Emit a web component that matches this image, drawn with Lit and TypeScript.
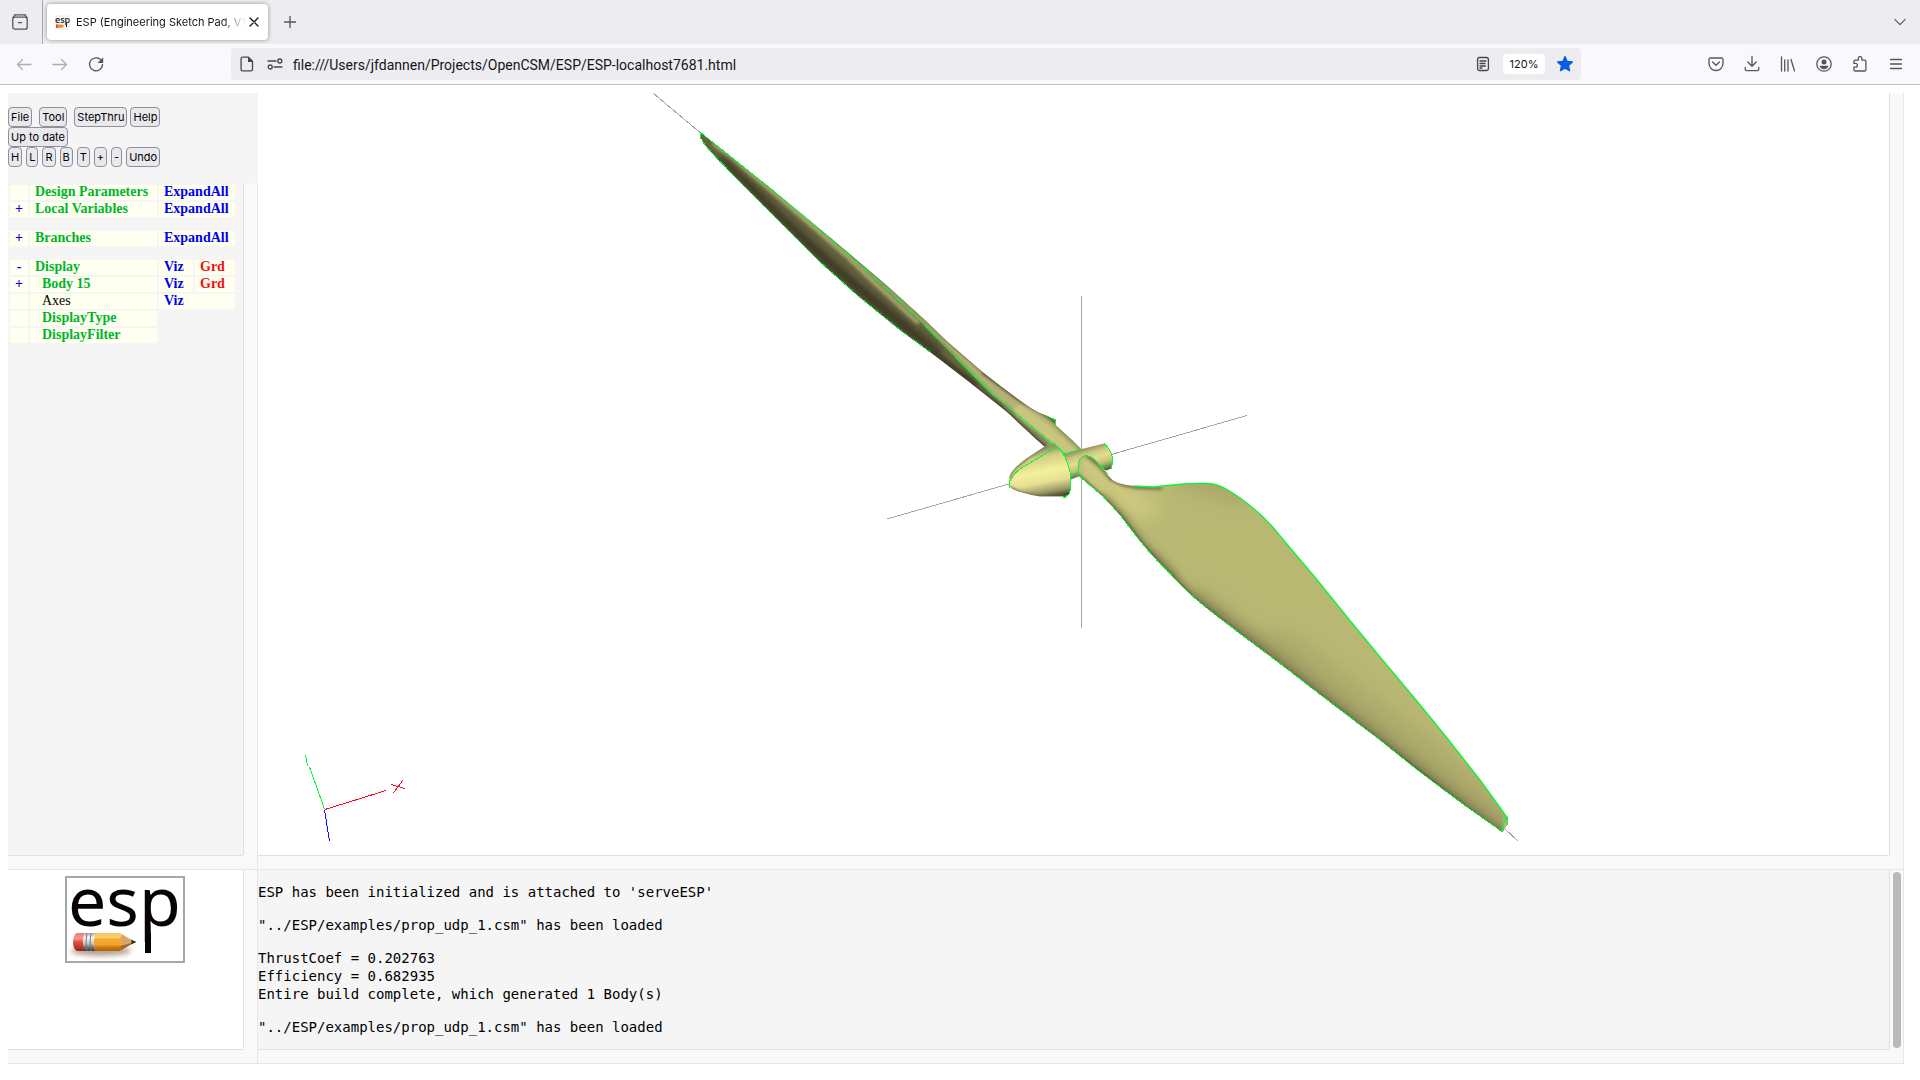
import { LitElement, html, svg, css, nothing } from "lit";
import { customElement, state } from "lit/decorators.js";

type Link = "ExpandAll" | "Viz" | "Grd";
interface TreeRow {
  toggle?: "+" | "-";
  label: string;
  indent?: boolean;
  plain?: boolean;
  wide?: Link;
  viz?: boolean;
  grd?: boolean;
}

const icon = (body: unknown) => html`<svg class="icon" width="16" height="16" viewBox="0 0 16 16" aria-hidden="true">${body}</svg>`;

const ICONS = {
  view: svg`<path d="M3 .8h10"/><rect x=".8" y="3.2" width="14.4" height="12" rx="2"/><path d="M1 3.6 3 .8M15 3.6 13 .8M6.3 8.6h3.4"/>`,
  close: svg`<path d="m4 4 8 8M12 4l-8 8"/>`,
  plus: svg`<path d="M8 2.500v11M2.500 8h11"/>`,
  chevron: svg`<path d="m2 5 6 6 6-6"/>`,
  back: svg`<path d="M15 8.500H1.500M6.500 3.500 1.500 8.500 6.500 13.500"/>`,
  forward: svg`<path d="M1 8.500h13.500M9.500 3.500 14.500 8.500 9.500 13.500"/>`,
  reload: svg`<path d="M13.600 5A6.500 6.500 0 1 0 14.500 8.500"/><path class="solid" d="M15.200 1.300v5.200a.5.5 0 0 1-.5.5H9.500z"/>`,
  page: svg`<path d="M3.700 1.200h5.800l4 4v8.100a1.600 1.600 0 0 1-1.600 1.600H3.700a1.600 1.600 0 0 1-1.600-1.600V2.800a1.600 1.600 0 0 1 1.600-1.600z"/><path class="solid" d="M9 1v5h5z"/>`,
  tune: svg`<path d="M1 5h8M7 11h8"/><circle cx="12.800" cy="5" r="2"/><circle cx="3.200" cy="11" r="2"/>`,
  reader: svg`<rect x="2.600" y="1.500" width="10.800" height="13" rx="1.800"/><path d="M5 5h6M5 7.500h5M5 10h5.500M5 12h2"/>`,
  star: svg`<path class="star" d="m8 .6 2.200 4.800 5.200.6-3.900 3.600 1.100 5.200L8 12.300 3.400 14.800l1.100-5.200L.6 6l5.200-.6z"/>`,
  pocket: svg`<path d="M2.300 2h11.400a1.300 1.300 0 0 1 1.300 1.300v4.200a7 7 0 0 1-14 0V3.300A1.300 1.300 0 0 1 2.300 2z"/><path d="m4.600 6 3.400 3.300L11.400 6"/>`,
  download: svg`<path d="M8 .5V10M3.800 6 8 10.200 12.200 6M1.200 11.500v1.600a1.600 1.600 0 0 0 1.600 1.600h10.400a1.600 1.600 0 0 0 1.600-1.600v-1.600"/>`,
  library: svg`<path d="M1.500 1v14M4.700 4v11M8 4v11M11 3.500l3.500 11.500"/>`,
  account: svg`<circle cx="8" cy="8" r="7.200"/><circle class="solid" cx="8" cy="5.900" r="2.500"/><path class="solid" d="M3.500 9.800h9a4.700 4.700 0 0 1-9 0z"/>`,
  puzzle: svg`<path d="M6.300 4.200V2.500a1.800 1.800 0 0 1 3.600 0v1.700h2.700a1.300 1.300 0 0 1 1.300 1.300v8.200a1.300 1.300 0 0 1-1.300 1.300H3.200a1.300 1.300 0 0 1-1.300-1.300v-2.500h1.600a1.900 1.900 0 0 0 0-3.800H1.900V5.500a1.300 1.300 0 0 1 1.300-1.300z"/>`,
  menu: svg`<path d="M2.500 3.500h11M2.500 8h11M2.500 12.500h11"/>`,
};

@customElement("esp-logo")
class EspLogo extends LitElement {
  static styles = css`
    :host { display: block; }
    svg { display: block; width: 100%; height: auto; overflow: visible; }
    .word { font-family: "Noto Sans", "Open Sans", sans-serif; font-size: 68px; fill: #080404; }
  `;
  render() {
    return html`<svg viewBox="0 0 116 83" role="img" aria-label="esp">
      <defs>
        <linearGradient id="wood" x1="0" y1="0" x2="0" y2="1">
          <stop offset="0" stop-color="#f9c258"/><stop offset=".28" stop-color="#fbd473"/>
          <stop offset=".32" stop-color="#f5ab35"/><stop offset=".68" stop-color="#f2a12c"/>
          <stop offset=".72" stop-color="#d98418"/><stop offset="1" stop-color="#a9620f"/>
        </linearGradient>
        <linearGradient id="rubber" x1="0" y1="0" x2="0" y2="1">
          <stop offset="0" stop-color="#ee7a6c"/><stop offset=".3" stop-color="#f69a8c"/>
          <stop offset=".5" stop-color="#e8503f"/><stop offset="1" stop-color="#9c2218"/>
        </linearGradient>
        <linearGradient id="metal" x1="0" y1="0" x2="0" y2="1">
          <stop offset="0" stop-color="#a8a8a8"/><stop offset=".25" stop-color="#fafafa"/>
          <stop offset=".6" stop-color="#c4c4c4"/><stop offset=".8" stop-color="#6e6e6e"/>
          <stop offset="1" stop-color="#3c3c3c"/>
        </linearGradient>
        <filter id="soft" x="-20%" y="-80%" width="140%" height="260%"><feGaussianBlur stdDeviation="2.500"/></filter>
      </defs>
      <ellipse cx="34" cy="73" rx="30" ry="5" fill="#7a5a38" opacity=".55" filter="url(#soft)"/>
      <text class="word" x="1" y="48">esp</text>
      <rect x="78" y="55" width="6" height="20" fill="#080404"/>
      <path d="M10 55h8v18h-8q-4-2-4-9t4-9z" fill="url(#rubber)"/>
      <path d="M17 55h11q-2 9 0 18H17q-2-9 0-18z" fill="url(#metal)"/>
      <path d="M20 55q-2 9 0 18M24 55q-2 9 0 18" stroke="#777" fill="none"/>
      <path d="M28 55h25l5 9-5 9H28q-2-9 0-18z" fill="url(#wood)"/>
      <path d="M53 55 68 64 53 73q3-2 0-5 4-4 0-8 3-2 0-5z" fill="#dda468"/>
      <path d="M53 68 68 64 53 73q2-2 0-5z" fill="#a3672f"/>
      <path d="M64 61.500 69.500 64 64 66.500q1.500-2.500 0-5z" fill="#2c2a28"/>
    </svg>`;
  }
}

@customElement("model-view")
class ModelView extends LitElement {
  static styles = css`
    :host { display: block; min-height: 0; background: #fff; }
    svg { display: block; width: 100%; height: 100%; }
    .axis { stroke: #a5a5a5; stroke-width: 1; shape-rendering: crispEdges; fill: none; }
    .edge { stroke: #0cf53c; stroke-width: 1; fill: none; shape-rendering: crispEdges; }
    .bold { stroke-width: 1.400; shape-rendering: auto; }
    .x { stroke: #f5101c; } .y { stroke: #0cf53c; } .z { stroke: #0c14f5; }
    .triad { stroke-width: 1; fill: none; shape-rendering: crispEdges; }
    .shade { fill: none; stroke-linecap: round; stroke-linejoin: round; }
    .b2 { filter: url(#b2); } .b4 { filter: url(#b4); } .b8 { filter: url(#b8); }
  `;
  render() {
    const upper = "M700 132C725 152 749 171 773 190L813 223 847 251.500 887 285.500 923 318 948 342 985 374Q1003 388 1020 400.500T1045 415L1055.500 420V425L1072 440 1084 452 1070 462 1045 447 1037 440 1007 412 973 385 930 352 900 330 857 295 820 262 780 222 740 182 717 158.500 705 145 700 137z";
    const lowEdge = "M1078 475 1103.500 497Q1112 506 1120 515C1128 525 1135 535 1143.500 545Q1155 559 1170 573.500 1180 585 1193.500 597 1210 611 1230 626L1280 663.500 1330 702 1380 740 1420 772 1467 807 1502.500 832";
    const topEdge = "M1134 486 1153 487 1183 484Q1196 483 1207 483.500T1227 489.500Q1240 497 1253.500 508.500 1264 517 1273.500 528L1293.500 552 1313.500 575.500 1347 617 1380 657 1413.500 697Q1430 717 1447 738L1480 780 1497 803.500 1507 817.500";
    const lower = "M1078 475 1078.500 463.500Q1079 459 1082 457T1086 455.500Q1090 455.500 1094 459L1100 466 1110 477.500Q1114 482 1120 483.500T1134 486L1153 487 1183 484Q1196 483 1207 483.500T1227 489.500Q1240 497 1253.500 508.500 1264 517 1273.500 528L1293.500 552 1313.500 575.500 1347 617 1380 657 1413.500 697Q1430 717 1447 738L1480 780 1497 803.500 1507 817.500V825L1502.500 832 1467 807 1420 772 1380 740 1330 702 1280 663.500 1230 626Q1210 611 1193.500 597 1180 585 1170 573.500 1155 559 1143.500 545C1135 535 1128 525 1120 515Q1112 506 1103.500 497z";
    const cone = "M1009 485C1008 478 1010 474 1012 471.500Q1018 464 1027 458T1047 445L1052 443Q1055 443 1057 446 1062 451 1065 457 1068 463 1069.500 470 1071 475 1071 481 1071 488 1069.500 493.500L1065 497.500 1062 496.500 1040 496.500Q1030 495 1020 492T1009 485z";
    const shaft = "M1064 454 1082 449 1104 443.500Q1107 446 1108.500 448.500 1111 452 1112 455.500T1112.500 463.500L1111 468.500 1106.500 470.500 1100 468 1071 479.500z";
    return html`<svg viewBox="258 93 1631 762" preserveAspectRatio="xMidYMid meet" role="img" aria-label="Propeller model">
      <defs>
        <clipPath id="cu"><path d="${upper}"/></clipPath>
        <clipPath id="cl"><path d="${lower}"/></clipPath>
        <clipPath id="cc"><path d="${cone}"/></clipPath>
        <filter id="b2" filterUnits="userSpaceOnUse" x="650" y="90" width="900" height="800"><feGaussianBlur stdDeviation="1.800"/></filter>
        <filter id="b4" filterUnits="userSpaceOnUse" x="650" y="90" width="900" height="800"><feGaussianBlur stdDeviation="4"/></filter>
        <filter id="b8" filterUnits="userSpaceOnUse" x="650" y="90" width="900" height="800"><feGaussianBlur stdDeviation="10"/></filter>
        <linearGradient id="gs" gradientUnits="userSpaceOnUse" x1="1086" y1="448" x2="1094" y2="474">
          <stop offset="0" stop-color="#96925e"/><stop offset=".2" stop-color="#c9c580"/>
          <stop offset=".45" stop-color="#e2de90"/><stop offset=".7" stop-color="#c2be7a"/>
          <stop offset="1" stop-color="#55523a"/>
        </linearGradient>
        <linearGradient id="gc" gradientUnits="userSpaceOnUse" x1="1036" y1="450" x2="1045" y2="498">
          <stop offset="0" stop-color="#9a9664"/><stop offset=".16" stop-color="#d2ce85"/>
          <stop offset=".46" stop-color="#f4f09a"/><stop offset=".68" stop-color="#e4e092"/>
          <stop offset=".88" stop-color="#9c9864"/><stop offset="1" stop-color="#4a4832"/>
        </linearGradient>
      </defs>

      <path class="axis" d="M1081.500 296V628M887 519 1247 415.500M653 93 700 132.500M1505 829 1518 841"/>

      <g clip-path="url(#cu)">
        <path d="${upper}" fill="#66633f"/>
        <path class="shade b2" stroke="#a8a46c" stroke-width="5" d="M715 144 773 192 815 228 847 256 875 283 917 322"/>
        <path class="shade b4" stroke="#3b3925" stroke-width="11" d="M722 162 745 185 785 223 825 260 860 291 902 325 935 352"/>
        <path class="shade b2" stroke="#3f3d28" stroke-width="5" d="M745 182 770 210 818 253 860 289 905 327 945 361 975 384"/>
        <path class="shade b2" stroke="#55523a" stroke-width="3" d="M705 146 740 182 780 222 820 262 857 295 900 330 930 352"/>
        <path class="b2" fill="#b5b174" d="M830 239 887 285 923 318 948 342 985 374 1020 400 1055 420 1086 452 1065 454 1048 440 993 395 962 363 917 317 875 278z"/>
        <path class="shade b2" stroke="#c9c57f" stroke-width="13" d="M1020 412 1046 431 1080 462"/>
        <path class="shade b2" stroke="#8a8658" stroke-width="2" d="M830 237 887 285 923 318 948 342 985 374"/>
        <path class="shade b2" stroke="#5a573a" stroke-width="5" d="M985 373 1020 399 1045 413 1057 422"/>
        <path class="shade b2" stroke="#85825a" stroke-width="4" d="M1058 426 1086 452"/>
        <path class="shade b2" stroke="#949060" stroke-width="4" d="M1005 407 1025 426 1050 447"/>
        <path class="shade b2" stroke="#494630" stroke-width="5" d="M973 386 1007 413 1037 441 1047 450"/>
      </g>
      <path class="edge" d="M700 132 773 190.500 813 224.500 847 253.500 875 278.500 917 317 962 363.500 993.500 395 1048.500 440 1065 453.500"/>
      <path class="edge" stroke-dasharray="7 2" d="M700 132V137L705 145 717 158.500 740 182 780 222 820 262 857 295 900 330 930 352"/>
      <path class="edge" d="M1045 415 1055.500 420V425"/>

      <path d="${shaft}" fill="url(#gs)"/>
      <path class="edge" d="M1066 453.500 1082 449M1104 443.500Q1107 446 1108.500 448.500 1111 452 1112 455.500T1112.500 463.500L1111 469M1071 474.500 1079 472.500M1100 466 1112.500 463"/>

      <g clip-path="url(#cc)">
        <path d="${cone}" fill="url(#gc)"/>
        <path class="shade b2" stroke="#7d7a50" stroke-width="3" d="M1009 478 1014 469 1028 457 1048 444"/>
        <path class="shade b2" stroke="#69663f" stroke-width="3" d="M1010 488 1022 494 1042 498H1068"/>
      </g>
      <path class="edge" d="M1009.500 488V482Q1012 476 1017 471.500T1030 463L1057 446.500M1047 445 1052 443Q1055 443 1057 446 1062 451 1065 457 1068 463 1069.500 470 1071 475 1071 481 1071 488 1069.500 493.500L1065 497.500 1062 496.500"/>

      <g clip-path="url(#cl)">
        <path d="${lower}" fill="#b9b873"/>
        <path class="shade b8" stroke="#a5a166" stroke-width="18" d="M1185 478 1210 482 1240 494"/>
        <path class="shade b8" stroke="#aeaa6c" stroke-width="66" d="M1280 664 1380 740 1467 808 1510 840"/>
        <path class="shade b8" stroke="#8a8657" stroke-width="24" d="M1195 606 1280 672 1380 750 1467 816 1510 848"/>
        <path class="shade b4" stroke="#7c7950" stroke-width="8" d="M1150 556 1195 600 1280 665 1380 742 1467 809 1504 836"/>
        <path class="shade b2" stroke="#3f3d28" stroke-width="3" d="M1170 575 1193 599 1230 628 1280 666 1380 742 1467 809 1503 835"/>
        <path class="shade b8" stroke="#d2ce82" stroke-width="22" d="M1092 474 1118 494 1145 508"/>
        <path class="shade b2" stroke="#cbc77f" stroke-width="9" d="M1086 464 1103 482 1122 496"/>
        <path class="shade b2" stroke="#7b784e" stroke-width="4" d="M1088 456 1100 466 1111 479 1122 484 1136 487 1160 488"/>
        <path class="shade b4" stroke="#8a8658" stroke-width="10" d="M1104 500 1120 517 1143 547 1172 577"/>
        <path class="shade b2" stroke="#5c593b" stroke-width="4" d="M1077 475 1103 498 1120 516 1143 546 1172 577"/>
        <path class="shade b2" stroke="#d8d486" stroke-width="2" d="M1505 820V830"/>
      </g>
      <path class="edge bold" d="${topEdge}"/>
      <path class="edge" d="M1078 475V464Q1079 459 1082 457T1086 455.500Q1090 455.500 1094 459L1108 474M1507 817V825M1507 817Q1502 824 1502.500 832"/>
      <path class="edge" stroke-dasharray="9 2" d="${lowEdge}"/>

      <path class="triad y" d="M305.500 755 307.500 766M309.500 767 324.500 809"/>
      <path class="triad x" d="M325 809.500 386 790.500M391 784.500 405 788.500M403 780 393.500 793"/>
      <path class="triad z" d="M324.500 810 329.500 841"/>
    </svg>`;
  }
}

@customElement("app-root")
class AppRoot extends LitElement {
  @state() private url = "file:///Users/jfdannen/Projects/OpenCSM/ESP/ESP-localhost7681.html";

  private groups: TreeRow[][] = [
    [
      { label: "Design Parameters", wide: "ExpandAll" },
      { toggle: "+", label: "Local Variables", wide: "ExpandAll" },
    ],
    [{ toggle: "+", label: "Branches", wide: "ExpandAll" }],
    [
      { toggle: "-", label: "Display", viz: true, grd: true },
      { toggle: "+", label: "Body 15", indent: true, viz: true, grd: true },
      { label: "Axes", indent: true, plain: true, wide: "Viz" },
      { label: "DisplayType", indent: true },
      { label: "DisplayFilter", indent: true },
    ],
  ];

  private messages = [
    "ESP has been initialized and is attached to 'serveESP'",
    `"../ESP/examples/prop_udp_1.csm" has been loaded`,
    "ThrustCoef = 0.202763\nEfficiency = 0.682935\nEntire build complete, which generated 1 Body(s)",
    `"../ESP/examples/prop_udp_1.csm" has been loaded`,
  ];

  static styles = css`
    :host { display: flex; flex-direction: column; min-height: 100vh; background: #fff; color: #000;
      font-family: Inter, "Liberation Sans", sans-serif; }
    * { box-sizing: border-box; }
    button { font: inherit; color: inherit; }
    .icon { display: block; fill: none; stroke: currentColor; stroke-width: 1.300; stroke-linecap: round; stroke-linejoin: round; overflow: visible; }
    .icon .solid { fill: currentColor; stroke: none; }
    .icon .star { fill: #0560df; stroke: #0560df; }
    .icon-btn { display: flex; align-items: center; justify-content: center; border: 0; padding: 0; background: none; color: #55545f; width: 36px; height: 36px; flex: none; }
    .icon-btn:disabled { color: #aeadb5; }

    .tabs { display: flex; align-items: center; height: 44px; background: #ededf1; padding-right: 2px; }
    .pinned { display: flex; align-items: center; justify-content: center; width: 43px; height: 44px; border-right: 1px solid #a9a9af; padding-right: 2px; }
    .tab { display: flex; align-items: center; width: 221px; height: 36px; margin: 0 4px; padding: 0 8px; border-radius: 4px; background: #fff; box-shadow: 0 0 4px rgba(0, 0, 0, .4); color: #15141a; }
    .favicon { flex: none; display: block; background: #f4f4f6; overflow: visible; }
    .title { flex: 1; margin-left: 6px; font-size: 11px; line-height: 16px; white-space: nowrap;
      -webkit-mask-image: linear-gradient(to left, transparent 0, #000 24px); mask-image: linear-gradient(to left, transparent 0, #000 24px); }
    .tab .icon-btn { width: 16px; height: 16px; color: #15141a; }
    .all { margin-left: auto; }
    .all .icon { width: 14px; }

    .bar { display: flex; align-items: center; height: 41px; padding: 0 6px; background: #f9f9fb; border-bottom: 1px solid #c2c2c8; }
    .nav { display: flex; }
    .address { display: flex; align-items: center; flex: 1; height: 32px; margin: 0 117px; padding: 0 8px; border-radius: 4px; background: #ededf1; color: #45444e; }
    .address .tune { margin: 0 10px 0 12px; }
    .address input { flex: 1; min-width: 0; border: 0; padding: 2px 0 0; background: none; color: #15141a; font: 14px/20px Roboto, "Liberation Sans", sans-serif; outline: none; }
    .zoom { height: 20px; margin: 0 12px; padding: 0; width: 42px; border: 0; border-radius: 3px; background: #fff; color: #15141a; font-size: 11px; line-height: 20px; }
    .plain { border: 0; padding: 0; background: none; }

    .page { display: grid; flex: 1; grid-template-columns: 250px minmax(0, 1fr); grid-template-rows: minmax(0, 1fr) 194px; padding: 8px 16px 16px 8px; }
    .side { display: flex; flex-direction: column; min-height: 0; }
    .pane { display: grid; flex: 1; min-height: 0; grid-template-columns: minmax(0, 1fr) 15px; grid-template-rows: minmax(0, 1fr) 15px; }
    .track { background: #f9f9f9; border: 0 solid #e7e7e7; }
    .track.v { border-left: 1px solid #e0e0e0; border-right-width: 1px; padding: 2px 2px 1px 3px; }
    .track.h { border-top: 1px solid #e0e0e0; border-bottom-width: 1px; }
    .track.c { border-right-width: 1px; border-bottom-width: 1px; }
    .thumb { width: 8px; height: 100%; border-radius: 4px; background: #b9b9b9; }
    .grey { background: #f5f5f5; }

    .tools { height: 90px; padding-top: 14px; background: #f5f5f5; font: 11px/16px Inter, "Liberation Sans", sans-serif; }
    .tools .row { display: flex; height: 20px; gap: 4px; }
    .tools .row.main { gap: 7px; }
    .tools button { height: 20px; padding: 0 2px; border: 1px solid #8f8f9d; border-radius: 4px; background: #e9e9ed; line-height: 16px; }
    .pair { display: flex; gap: 3px; }

    .tree { border-collapse: separate; border-spacing: 2px; width: 229px; table-layout: fixed; font: 14px/14px "Liberation Serif", "Times New Roman", serif; }
    .c1 { width: 18px; } .c2 { width: 127px; } .c3 { width: 34px; }
    .tree td { height: 15px; padding: 0 5px 1px; background: #fffff0; white-space: nowrap; vertical-align: top; }
    .tree td.toggle { padding: 0; text-align: center; }
    .tree .indent { padding-left: 12px; }
    .tree .gap td, .tree td.none { background: none; padding: 0; }
    .tree .gap td { height: 10px; line-height: 10px; }
    .tree button, .tree a { display: inline; border: 0; padding: 0; background: none; font-weight: bold; text-decoration: none; line-height: 14px; }
    .green { color: #00b52d; } .blue { color: #0000ee; } .red { color: #f50a14; }

    .brand { padding: 6px 2px 0 0; }
    .logo { width: 120px; margin: 0 auto; padding: 0; border: 2px solid #a2a8ad; }
    .console { padding-top: 13px; background: #f5f5f5; }
    pre { margin: 0 0 15px; font: 14px/18px "DejaVu Sans Mono", "Liberation Mono", monospace; }
  `;

  private iconButton(label: string, body: unknown, disabled = false) {
    return html`<button class="icon-btn" aria-label=${label} ?disabled=${disabled}>${icon(body)}</button>`;
  }

  private treeRow(r: TreeRow) {
    return html`<tr>
      <td class="toggle">${r.toggle ? html`<button class="blue" aria-label="Toggle ${r.label}">${r.toggle}</button>` : nothing}</td>
      <td class=${r.indent ? "indent" : ""}>${r.plain ? r.label : html`<a class="green" href="#">${r.label}</a>`}</td>
      ${r.wide
        ? html`<td colspan="2"><a class="blue" href="#">${r.wide}</a></td>`
        : r.viz
          ? html`<td><a class="blue" href="#">Viz</a></td><td><a class="red" href="#">Grd</a></td>`
          : html`<td class="none" colspan="2"></td>`}
    </tr>`;
  }

  render() {
    return html`
      <header>
        <div class="tabs">
          <div class="pinned">${this.iconButton("View recent browsing", ICONS.view)}</div>
          <div class="tab">
            <svg class="favicon" width="15" height="15" viewBox="0 0 15 15" aria-hidden="true">
              <text x="0" y="8" font-family="Noto Sans, sans-serif" font-size="9" font-weight="500" fill="#1a1614">esp</text>
              <rect x="11" y="8" width="1" height="4" fill="#1a1614"/>
              <path d="M1 9.500h6l2.500 1.500L7 12.800H1z" fill="#e8912c"/>
              <path d="M1 9.500h1.500v3.300H1z" fill="#d8452f"/>
            </svg>
            <span class="title">ESP (Engineering Sketch Pad, V1</span>
            ${this.iconButton("Close tab", ICONS.close)}
          </div>
          ${this.iconButton("New tab", ICONS.plus)}
          <span class="all">${this.iconButton("List all tabs", ICONS.chevron)}</span>
        </div>
        <div class="bar">
          <nav class="nav">
            ${this.iconButton("Back", ICONS.back, true)}
            ${this.iconButton("Forward", ICONS.forward, true)}
            ${this.iconButton("Reload", ICONS.reload)}
          </nav>
          <div class="address">
            ${icon(ICONS.page)}
            <span class="tune">${icon(ICONS.tune)}</span>
            <input aria-label="Address" .value=${this.url} @input=${(e: Event) => { this.url = (e.target as HTMLInputElement).value; }}>
            ${icon(ICONS.reader)}
            <button class="zoom">120%</button>
            <button class="plain" aria-label="Edit bookmark">${icon(ICONS.star)}</button>
          </div>
          <div class="nav">
            ${this.iconButton("Save to Pocket", ICONS.pocket)}
            ${this.iconButton("Downloads", ICONS.download)}
            ${this.iconButton("Library", ICONS.library)}
            ${this.iconButton("Account", ICONS.account)}
            ${this.iconButton("Extensions", ICONS.puzzle)}
            ${this.iconButton("Menu", ICONS.menu)}
          </div>
        </div>
      </header>
      <main class="page">
        <section class="side">
          <div class="tools">
            <div class="row main">
              <button>File</button><button>Tool</button>
              <div class="pair"><button>StepThru</button><button>Help</button></div>
            </div>
            <div class="row"><button>Up to date</button></div>
            <div class="row">${["H", "L", "R", "B", "T", "+", "-", "Undo"].map((t) => html`<button>${t}</button>`)}</div>
          </div>
          <div class="pane">
            <div class="grey">
              <table class="tree">
                <colgroup><col class="c1"><col class="c2"><col class="c3"><col></colgroup>
                ${this.groups.map((g, i) => html`${i ? html`<tr class="gap"><td colspan="4"></td></tr>` : nothing}${g.map((r) => this.treeRow(r))}`)}
              </table>
            </div>
            <div class="track v"></div><div class="track h"></div><div class="track c"></div>
          </div>
        </section>
        <section class="pane">
          <model-view></model-view>
          <div class="track v"></div><div class="track h"></div><div class="track c"></div>
        </section>
        <section class="pane">
          <div class="brand"><div class="logo"><esp-logo></esp-logo></div></div>
          <div class="track v"></div><div class="track h"></div><div class="track c"></div>
        </section>
        <section class="pane">
          <div class="console">${this.messages.map((m) => html`<pre>${m}</pre>`)}</div>
          <div class="track v"><div class="thumb"></div></div><div class="track h"></div><div class="track c"></div>
        </section>
      </main>`;
  }
}
